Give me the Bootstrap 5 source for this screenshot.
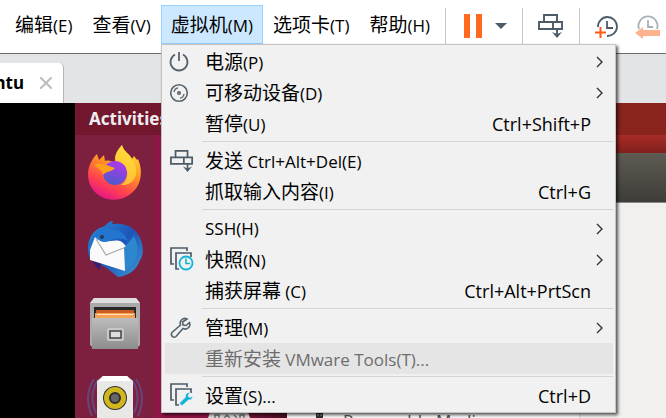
<!DOCTYPE html>
<html lang="zh-CN">
<head>
<meta charset="utf-8">
<meta name="viewport" content="width=device-width, initial-scale=1">
<title>Ubuntu - VMware Workstation</title>
<link href="https://cdn.jsdelivr.net/npm/bootstrap@5.3.0/dist/css/bootstrap.min.css" rel="stylesheet">
<style>
body{font:19px/30px "Noto Sans CJK SC",sans-serif;color:#000;background:#fff}
.lat{font-family:"Open Sans","Noto Sans",sans-serif;font-size:17px}
.keys{font-family:"Open Sans","Noto Sans",sans-serif;font-size:18px}
.appbar{height:54px;padding:5px 0 0 5px;border-bottom:1px solid #6b6b6b}
.menus button{font:inherit;line-height:36px;height:39px;padding:0 9px;border:1px solid transparent;background:none;color:#000}
.menus .cur{background:#cce8ff;border-color:#99d1ff}
.drop{left:161px;top:44px;width:455px;padding:1px 2px 1px 3px;background:#f1f1f1;border:1px solid #c4c4c4;box-shadow:2px 2px 3px rgba(0,0,0,.65);z-index:5}
.entry{font:inherit;line-height:30px;height:31px;padding:0 22px 0 0;border:0;background:none;color:#000}
.entry:disabled{background:#e5e5e5;color:#6d6d6d}
.entry .ico{width:40px;padding-left:1px}
.more{margin-right:-13px}
.rule{height:1px;margin:2px 0 3px 37px;background:#d5d5d5}
.tools{height:42px;margin-left:5px}
.tools button,.tab button{border:0;background:none;padding:0;line-height:0}
.split{width:1px;height:36px;margin:0 15px;background:#c8c8c8}
.split:first-child{margin-left:0}
.tabs{height:49px;background:#e3e4e6;padding-top:9px}
.tab{width:64px;background:#fff;border-right:1px solid #b4b4b4;border-radius:0 5px 0 0;font:700 17px/40px "Noto Sans",sans-serif}
.tab .name{width:24px}
.blackside{width:75px;background:#000}
.ubuntu{width:212px;background:linear-gradient(90deg,#911548 70%,#4a0f24)}
.topline{height:32px;background:#73172f;color:#eee;font:700 17px/32px "Noto Sans",sans-serif;padding-left:14px}
.dock{width:80px;background:#7d2040;padding-top:8px;gap:18px}
.caption-art{margin-left:53px}
.win{background:#f1f0ee;min-width:0}
.red1{height:32px;background:#88231e}
.red2{height:18px;background:linear-gradient(#a82b27,#80201d)}
.head{height:50px;background:linear-gradient(#5e5b52,#3d3c37);border-bottom:1px solid #888}
.side{width:294px;padding:206px 0 0 29px;background:#fafafa;border-right:2px solid #e2e2e2;font:17px/24px "Noto Sans",sans-serif;color:#555}
svg{display:block;flex:none}
</style>
<script src="https://cdn.jsdelivr.net/npm/bootstrap@5.3.0/dist/js/bootstrap.bundle.min.js"></script>
</head>
<body class="vh-100 overflow-hidden d-flex flex-column">
<svg width="0" height="0" class="position-absolute" aria-hidden="true">
<symbol id="send" viewBox="0 0 26 26"><g fill="none" stroke="#4c5b68" stroke-width="1.900"><path d="M6 9V2h13v7M1 9h23v7H1zM15 9v7M19 16v7"/></g><path d="M14 19l5 2 5-2-5 6z" fill="#4c5b68"/></symbol>
<symbol id="stack" viewBox="0 0 26 26"><path d="M4 17H1V1h16v3M9 22H6V6h15v4" fill="none" stroke="#4c5b68" stroke-width="1.700"/></symbol>
<symbol id="chev" viewBox="0 0 8 12"><path d="M1 1l5 5-5 5" fill="none" stroke="#333" stroke-width="1.400"/></symbol>
</svg>
<header class="appbar d-flex position-relative flex-shrink-0">
<nav class="menus d-flex flex-shrink-0 text-nowrap" aria-label="主菜单">
<button>编辑<span class="lat">(E)</span></button>
<button>查看<span class="lat">(V)</span></button>
<button class="cur" aria-expanded="true">虚拟机<span class="lat">(M)</span></button>
<button>选项卡<span class="lat">(T)</span></button>
<button>帮助<span class="lat">(H)</span></button>
</nav>
<div class="tools d-flex align-items-center flex-shrink-0">
<span class="split"></span>
<button aria-label="暂停"><svg width="46" height="26"><path d="M3 1h6v24H3zM15 1h6v24h-6z" fill="#ff6a1f"/><path d="M34 10h12l-6 6z" fill="#4c5b68"/></svg></button>
<span class="split"></span>
<button aria-label="发送 Ctrl+Alt+Del"><svg width="26" height="26"><use href="#send"/></svg></button>
<span class="split"></span>
<button aria-label="拍摄快照"><svg width="24" height="26" viewBox="0 0 24 26"><g fill="none" stroke="#4c5b68" stroke-width="1.800"><path d="M3 14A9.500 9.500 0 1 1 12 23M12 8v7h6"/></g><path d="M0 19.500h11M5.500 14v11" stroke="#ff5a14" stroke-width="2"/></svg></button>
<button class="ms-3" aria-label="恢复快照"><svg width="26" height="26" viewBox="0 0 26 26"><g fill="none" stroke="#a9b1b8" stroke-width="1.800"><path d="M4 16A9.500 9.500 0 1 1 22 16M13 7v7h5"/></g><path d="M0 20l8-6v3h17v6H8v3z" fill="#ffb28e"/></svg></button>
</div>
<div class="drop position-absolute text-nowrap d-flex flex-column" role="menu">
<button class="entry d-flex align-items-center" role="menuitem"><span class="ico"><svg width="26" height="26" viewBox="0 0 26 26" fill="none" stroke="#56636e" stroke-width="1.800"><path d="M9 5.500a8.500 8.500 0 1 0 8 0M13 3v9"/></svg></span><span>电源<span class="lat">(P)</span></span><svg class="more ms-auto" width="8" height="12"><use href="#chev"/></svg></button>
<button class="entry d-flex align-items-center" role="menuitem"><span class="ico"><svg width="26" height="26" viewBox="0 0 26 26" fill="none" stroke="#56636e" stroke-width="1.600"><circle cx="13" cy="13" r="8.300"/><circle cx="13" cy="13" r="1.200"/><path d="M8 12q.5-3.500 4-4.200M18 14q-.5 3.500-4 4.200" stroke-width="1.300"/></svg></span><span>可移动设备<span class="lat">(D)</span></span><svg class="more ms-auto" width="8" height="12"><use href="#chev"/></svg></button>
<button class="entry d-flex align-items-center" role="menuitem"><span class="ico"></span><span>暂停<span class="lat">(U)</span></span><span class="keys ms-auto">Ctrl+Shift+P</span></button>
<div class="rule" role="separator"></div>
<button class="entry d-flex align-items-center" role="menuitem"><span class="ico"><svg class="ms-1" width="24" height="24"><use href="#send"/></svg></span><span>发送 <span class="lat">Ctrl+Alt+Del(E)</span></span></button>
<button class="entry d-flex align-items-center" role="menuitem"><span class="ico"></span><span>抓取输入内容<span class="lat">(I)</span></span><span class="keys ms-auto">Ctrl+G</span></button>
<div class="rule" role="separator"></div>
<button class="entry d-flex align-items-center" role="menuitem"><span class="ico"></span><span class="lat">SSH(H)</span><svg class="more ms-auto" width="8" height="12"><use href="#chev"/></svg></button>
<button class="entry d-flex align-items-center" role="menuitem"><span class="ico"><svg class="ms-1" width="26" height="26"><use href="#stack"/><circle cx="16" cy="16" r="6.500" fill="#f1f1f1" stroke="#12b5d6" stroke-width="1.800"/><path d="M16 11.500V16.500h4" fill="none" stroke="#12b5d6" stroke-width="1.600"/></svg></span><span>快照<span class="lat">(N)</span></span><svg class="more ms-auto" width="8" height="12"><use href="#chev"/></svg></button>
<button class="entry d-flex align-items-center" role="menuitem"><span class="ico"></span><span>捕获屏幕 <span class="lat">(C)</span></span><span class="keys ms-auto">Ctrl+Alt+PrtScn</span></button>
<div class="rule" role="separator"></div>
<button class="entry d-flex align-items-center" role="menuitem"><span class="ico"><svg class="ms-1" width="22" height="22" viewBox="0 0 22 22" fill="none" stroke="#56636e" stroke-width="1.600"><path d="M17 2c-4-2-8 2-6.500 6L2 15.500c-2 3 1.500 6 4 4L13 11.500c4 2 8-2 6.500-6l-3.500 3-3-.5-.5-3z"/></svg></span><span>管理<span class="lat">(M)</span></span><svg class="more ms-auto" width="8" height="12"><use href="#chev"/></svg></button>
<button class="entry d-flex align-items-center" role="menuitem" disabled><span class="ico"></span><span>重新安装 <span class="lat">VMware Tools(T)...</span></span></button>
<div class="rule" role="separator"></div>
<button class="entry d-flex align-items-center" role="menuitem"><span class="ico"><svg class="ms-1" width="26" height="26"><use href="#stack"/><path d="M20 9.500c-3-.5-5 2-4.500 4.500L10 19.500c-1 2 1 3.500 3 2.500l5.500-5c2.500.5 4.500-1.500 4-4l-2.500 1.500-2-1.500z" fill="#12b5d6" stroke="#f1f1f1" stroke-width=".7"/></svg></span><span>设置<span class="lat">(S)...</span></span><span class="keys ms-auto">Ctrl+D</span></button>
</div>
</header>
<div class="tabs d-flex flex-shrink-0">
<div class="tab d-flex align-items-center"><span class="name d-flex justify-content-end"><span>Ubuntu</span></span><button class="ms-3" aria-label="关闭标签"><svg width="12" height="12"><path d="M0 0l12 12M12 0L0 12" stroke="#bdbdbd" stroke-width="2"/></svg></button></div>
</div>
<main class="d-flex flex-grow-1 overflow-hidden">
<div class="blackside flex-shrink-0"></div>
<section class="ubuntu d-flex flex-column flex-shrink-0">
<div class="topline">Activities</div>
<div class="d-flex flex-grow-1 overflow-hidden">
<div class="dock d-flex flex-column align-items-center">
<svg width="58" height="58" viewBox="0 0 58 58"><defs><linearGradient id="fx" x1=".8" y1="0" x2=".3" y2="1"><stop offset="0" stop-color="#ffe83c"/><stop offset=".4" stop-color="#ff9a23"/><stop offset=".75" stop-color="#ff4050"/><stop offset="1" stop-color="#e5148a"/></linearGradient><linearGradient id="fp" x1=".7" y1="0" x2=".3" y2="1"><stop offset="0" stop-color="#b336f0"/><stop offset="1" stop-color="#4a5bc9"/></linearGradient></defs><path d="M36 2c1 6 8 9 10 14l2-3 3 4 1-1c4 9 4 20-1 28-11 17-36 17-46 0C0 34 1 21 11 11l2 6 5-5 1 6c4-1 6 0 10 2-1-8 3-13 7-18z" fill="url(#fx)"/><path d="M36 2c-5 5-9 12-5 17 12 3 14 17 4 23 14 1 20-13 11-26C44 11 37 8 36 2z" fill="#ffdc3b" opacity=".75"/><circle cx="29" cy="30" r="12" fill="url(#fp)"/><path d="M8 22c6-3 12 0 21 3-3 4-9 3-12 7-1-5-5-7-9-10z" fill="#ffa01d"/></svg>
<svg width="58" height="58" viewBox="0 0 58 58"><defs><linearGradient id="tb" x2="1" y2="1"><stop offset="0" stop-color="#2b8edb"/><stop offset=".5" stop-color="#1d54b8"/><stop offset="1" stop-color="#3e9ad8"/></linearGradient></defs><path d="M4 40C-2 23 6 10 19 7c2-3 5-5 8-5l-1 3c15-2 25 5 29 16 3 9 2 17-1 20-3 10-12 16-22 17L22 50z" fill="url(#tb)"/><path d="M3 38l10 13 3-8z" fill="#362075"/><path d="M4 31l5-13 6 3c5 4 14-2 21 2l7 7-4 22L4 41z" fill="#fafafa"/><path d="M10 20l10 16 20-8" fill="none" stroke="#aaa" stroke-width="1.300"/><path d="M9 18c1-7 9-10 17-7 8-1 14 5 16 11-6-3-12-3-17-1-6 3-10 3-16-3z" fill="#2276cf"/><circle cx="16" cy="18" r="2" fill="#2c3755"/><path d="M38 29l10-12c7 14 4 28-9 34z" fill="#2d87cc"/></svg>
<svg width="58" height="58" viewBox="0 0 58 58"><defs><linearGradient id="fc" y2="1" x2="0"><stop offset="0" stop-color="#bcbcbc"/><stop offset="1" stop-color="#8d8d8d"/></linearGradient></defs><path d="M8 3h42l4 5v42l-3 3H7l-3-3V8z" fill="#aaa"/><path d="M8 3h42l4 5H4z" fill="#ddd"/><path d="M8 12h42v12H8z" fill="#282828"/><path d="M10 15h38v10H10z" fill="#c95d22"/><path d="M9 18h40v7H9z" fill="#f4a154"/><path d="M11 19h36v1H11z" fill="#ffe0ba"/><path d="M6 23h46v31H6z" fill="url(#fc)"/><rect x="21" y="33" width="17" height="13" rx="2" fill="#c8c8c8"/><rect x="24" y="36" width="11" height="7" fill="#ddd" stroke="#444" stroke-width="1.500"/></svg>
<svg width="58" height="58" viewBox="0 0 58 58"><path d="M8 8Q-3 25 6 45M50 8q11 17 2 37M12 9Q2 24 10 42M46 9q10 15 2 33" fill="none" stroke="#565a9b" stroke-width="2" opacity=".65"/><path d="M17 5h24l6 5v48H11V10z" fill="#e8e8e6"/><path d="M17 5h24l4 5H13z" fill="#fff"/><circle cx="29" cy="27" r="12" fill="#303030"/><circle cx="29" cy="27" r="8.500" fill="none" stroke="#d1b71e" stroke-width="5"/><circle cx="29" cy="27" r="4" fill="#666"/></svg>
</div>
<svg class="caption-art align-self-end" width="42" height="6" viewBox="0 0 42 6" aria-hidden="true"><path d="M2 0h38l2 6H0z" fill="#ddd"/><path d="M7 6V3h4v3M16 6l3-3 3 3M26 3l3 3M32 6V3h4v3" fill="none" stroke="#777" stroke-width="1.500"/></svg>
</div>
</section>
<section class="win flex-grow-1 d-flex flex-column">
<div class="red1 flex-shrink-0"></div><div class="red2 flex-shrink-0"></div><div class="head flex-shrink-0"></div>
<div class="side d-flex"><svg width="7" height="14"><path d="M0 4h7v10H0z" fill="#333"/><path d="M1 6h2M4 6h2" stroke="#aaa"/></svg><span class="ms-3 ps-1">Removable Media</span></div>
</section>
</main>
</body>
</html>
